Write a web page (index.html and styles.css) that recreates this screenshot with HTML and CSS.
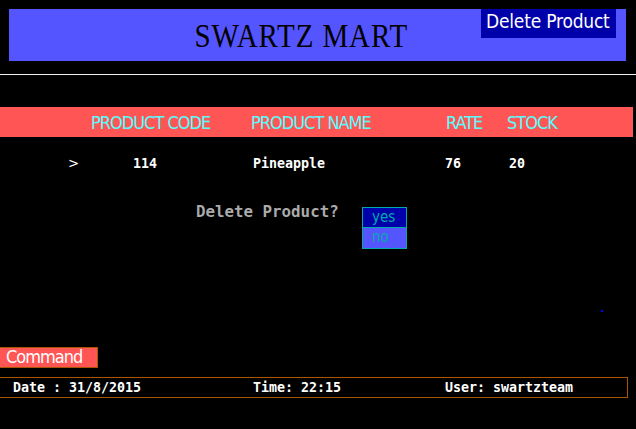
FILE: index.html
```html
<!DOCTYPE html>
<html>
<head>
<meta charset="utf-8">
<link rel="stylesheet" href="styles.css">
</head>
<body>
<div class="screen">
  <header class="banner">
    <h1 class="title"><span class="title-text">SWARTZ MART</span></h1>
    <div class="badge">Delete Product</div>
  </header>
  <div class="rule"></div>
  <div class="thead">
    <span>PRODUCT CODE</span>
    <span>PRODUCT NAME</span>
    <span>RATE</span>
    <span>STOCK</span>
  </div>
  <div class="trow">
    <span class="pointer">&gt;</span>
    <span>114</span>
    <span>Pineapple</span>
    <span>76</span>
    <span>20</span>
  </div>
  <div class="dialog">
    <div class="question">Delete Product?</div>
    <div class="choices">
      <div class="choice selected">yes</div>
      <div class="choice">no</div>
    </div>
  </div>
  <div class="cursor-dot"></div>
  <div class="command">Command</div>
  <footer class="status">
    <span>Date : 31/8/2015</span>
    <span>Time: 22:15</span>
    <span>User: swartzteam</span>
  </footer>
</div>
</body>
</html>
```
FILE: styles.css
```css
html, body {
  margin: 0;
  padding: 0;
  background: #000;
}
.screen {
  position: relative;
  width: 636px;
  height: 429px;
  overflow: hidden;
  background: #000;
}
.banner {
  position: relative;
  margin: 9px 10px 0 9px;
  height: 52px;
  background: #5555ff;
  display: flex;
  justify-content: center;
}
.title {
  margin: 0;
  padding-right: 33px;
  font-family: "Liberation Serif", serif;
  font-weight: normal;
  font-size: 33px;
  line-height: 52px;
  color: #000;
}
.title-text {
  display: inline-block;
  transform: scaleX(0.88);
  letter-spacing: 1px;
  position: relative;
  top: 1px;
}
.badge {
  position: absolute;
  top: 0;
  right: 10px;
  width: 135px;
  height: 29px;
  background: #0000aa;
  color: #fff;
  font-family: "DejaVu Sans Condensed", "DejaVu Sans", sans-serif;
  font-weight: 200;
  font-size: 19px;
  line-height: 24px;
  padding-left: 5px;
  box-sizing: border-box;
  letter-spacing: -0.2px;
}
.rule {
  margin-top: 13px;
  height: 1px;
  background: #f0f0f0;
}
.thead {
  margin-top: 32px;
  width: 633px;
  height: 30px;
  background: #ff5555;
  box-sizing: border-box;
  padding-left: 91px;
  display: grid;
  grid-template-columns: 160px 195px 61px auto;
  align-items: center;
  color: #55ffff;
  font-family: "DejaVu Sans Condensed", "DejaVu Sans", sans-serif;
  font-weight: 200;
  font-size: 18px;
  letter-spacing: -1px;
}
.trow {
  margin-top: 18px;
  height: 16px;
  box-sizing: border-box;
  padding-left: 68px;
  display: grid;
  grid-template-columns: 65px 120px 192px 64px auto;
  align-items: center;
  color: #fff;
  font-family: "DejaVu Sans Mono", monospace;
  font-weight: bold;
  font-size: 13.3px;
}
.pointer {
  font-family: "DejaVu Sans", sans-serif;
  font-weight: normal;
}
.dialog {
  margin-top: 31px;
  display: flex;
  align-items: flex-start;
  padding-left: 196px;
}
.question {
  width: 166px;
  color: #aaaaaa;
  font-family: "DejaVu Sans Mono", monospace;
  font-weight: bold;
  font-size: 15.8px;
  line-height: 20px;
}
.choices {
  margin-top: 5px;
  width: 45px;
  border: 1px solid #00aaaa;
  box-sizing: border-box;
}
.choice {
  height: 20px;
  background: #5555ff;
  color: #00aaaa;
  font-family: "DejaVu Sans Condensed", "DejaVu Sans", sans-serif;
  font-weight: 200;
  font-size: 15px;
  line-height: 18px;
  padding-left: 9px;
}
.choice.selected {
  background: #0000aa;
  border-bottom: 1px solid #00aaaa;
  height: 19px;
}
.cursor-dot {
  position: absolute;
  left: 601px;
  top: 310px;
  width: 2px;
  height: 2px;
  background: #0000ff;
}
.command {
  margin-top: 98px;
  width: 98px;
  height: 21px;
  box-sizing: border-box;
  background: #ff5555;
  border: 1px solid #aa5500;
  border-left: none;
  color: #fff;
  font-family: "DejaVu Sans Condensed", "DejaVu Sans", sans-serif;
  font-weight: 200;
  font-size: 18px;
  line-height: 18px;
  padding-left: 6px;
  letter-spacing: -1px;
}
.status {
  margin-top: 9px;
  width: 628px;
  height: 21px;
  box-sizing: border-box;
  border: 1px solid #aa5500;
  border-left: none;
  padding-left: 13px;
  display: grid;
  grid-template-columns: 240px 192px auto;
  align-items: center;
  color: #fff;
  font-family: "DejaVu Sans Mono", monospace;
  font-weight: bold;
  font-size: 13.3px;
}
```
